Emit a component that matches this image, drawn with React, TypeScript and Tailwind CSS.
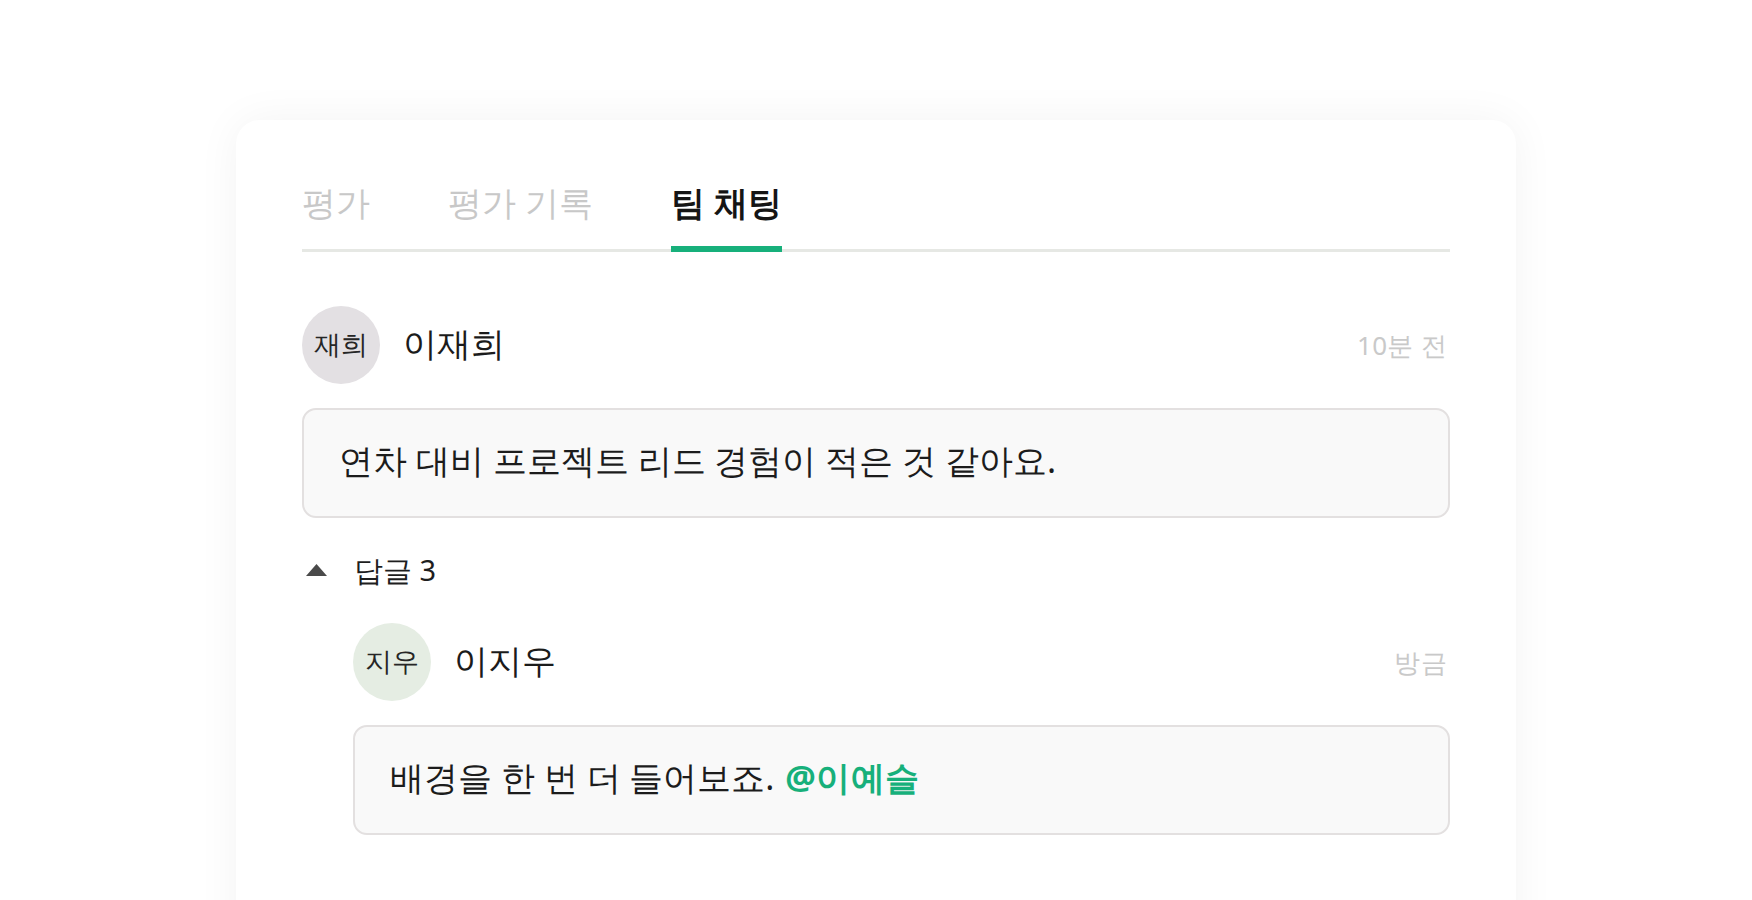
import React from 'react'

type Comment = {
	initials: string
	name: string
	time: string
	avatarBg: string
}

function Avatar({ initials, bg }: { initials: string; bg: string }) {
	return (
		<div className={`flex h-[78px] w-[78px] shrink-0 items-center justify-center rounded-full ${bg}`}>
			<span className="mb-[4px] text-[27px] leading-none text-[#262626]">{initials}</span>
		</div>
	)
}

function CommentHeader({ c }: { c: Comment }) {
	return (
		<div className="flex items-center">
			<Avatar initials={c.initials} bg={c.avatarBg} />
			<span className="mb-[5px] ml-[23px] text-[34px] leading-[48px] text-[#1b1b1b]">{c.name}</span>
			<span className="ml-auto mr-[3px] text-[26px] leading-[36px] tracking-[0.3px] text-[#c9c9c9]">{c.time}</span>
		</div>
	)
}

function Bubble({ children }: { children: React.ReactNode }) {
	return (
		<div className="rounded-[14px] border-2 border-[#e3e0e0] bg-[#f9f9f9] px-[35px] pb-[32px] pt-[26px] text-[34px] leading-[48px] text-[#1c1c1c]">
			{children}
		</div>
	)
}

const tabs = ['평가', '평가 기록', '팀 채팅']

export default function App() {
	const active = 2

	const main: Comment = { initials: '재희', name: '이재희', time: '10분 전', avatarBg: 'bg-[#e3e0e3]' }
	const reply: Comment = { initials: '지우', name: '이지우', time: '방금', avatarBg: 'bg-[#e5ede3]' }

	return (
		<div className="min-h-screen bg-white pt-[120px] font-sans">
			<div className="mx-auto h-[900px] w-[1280px] rounded-[24px] bg-white px-[66px] pt-[58px] shadow-[0_0_44px_rgba(0,0,0,0.05)]">
				{/* tabs */}
				<div className="flex gap-[78px] border-b-[3px] border-[#e6e8e4]">
					{tabs.map((t, i) => (
						<div key={t} className="relative pb-[23px]">
							<span
								className={
									i === active
										? 'text-[34px] leading-[48px] font-semibold text-[#151515]'
										: 'text-[34px] leading-[48px] text-[#c8c8c8]'
								}>
								{t}
							</span>
							{i === active && <div className="absolute -bottom-[3px] left-0 right-0 h-[6px] bg-[#17b07b]" />}
						</div>
					))}
				</div>

				{/* main comment */}
				<div className="mt-[54px]">
					<CommentHeader c={main} />
					<div className="mt-[24px]">
						<Bubble>연차 대비 프로젝트 리드 경험이 적은 것 같아요.</Bubble>
					</div>
				</div>

				{/* replies toggle */}
				<div className="mt-[32px] flex items-center">
					<svg width="21" height="12" viewBox="0 0 21 12" className="ml-[4px]">
						<path d="M10.5 0 L21 12 L0 12 Z" fill="#4a4a4a" />
					</svg>
					<span className="ml-[27px] text-[29px] leading-[40px] text-[#1e1e1e]">답글 3</span>
				</div>

				{/* reply */}
				<div className="ml-[51px] mt-[33px]">
					<CommentHeader c={reply} />
					<div className="mt-[24px]">
						<Bubble>
							배경을 한 번 더 들어보죠. <span className="ml-[2px] font-bold tracking-[0.5px] text-[#17b07b]">@이예슬</span>
						</Bubble>
					</div>
				</div>
			</div>
		</div>
	)
}
